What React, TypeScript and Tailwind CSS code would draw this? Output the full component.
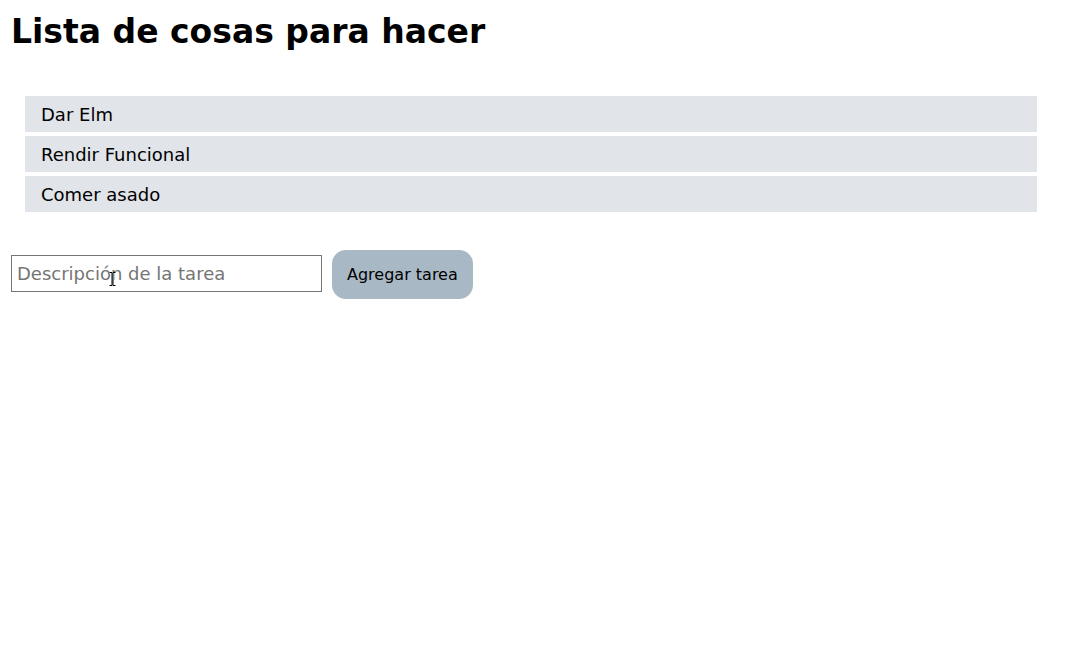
import React, { useState } from 'react';

export default function App() {
  const [tareas, setTareas] = useState<string[]>(['Dar Elm', 'Rendir Funcional', 'Comer asado']);
  const [texto, setTexto] = useState('');

  const agregar = () => {
    if (!texto.trim()) return;
    setTareas([...tareas, texto]);
    setTexto('');
  };

  return (
    <div className="min-h-screen bg-white px-[11px] pt-[8px] font-['DejaVu_Sans',sans-serif] text-black">
      <h1 className="text-[33px] leading-[48px] font-bold">Lista de cosas para hacer</h1>

      {/* Lista */}
      <ul className="mt-[40px] ml-[14px] mr-[37px] flex flex-col gap-[4px]">
        {tareas.map((t) => (
          <li key={t} className="flex h-[36px] items-center bg-[#e1e4e8] pl-[16px] text-[18px]">
            {t}
          </li>
        ))}
      </ul>

      {/* Formulario */}
      <div className="mt-[38px] flex items-start gap-[10px]">
        <div className="relative mt-[5px]">
          <input
            type="text"
            value={texto}
            onChange={(e) => setTexto(e.target.value)}
            placeholder="Descripción de la tarea"
            className="h-[37px] w-[311px] border border-[#767676] px-[5px] text-[18px] placeholder:text-[#757575] focus:outline-none"
          />
          <svg
            className="pointer-events-none absolute top-[17px] left-[98px]"
            width="7"
            height="14"
            viewBox="0 0 7 14"
          >
            <path d="M0.5 0.5h2.5v13h-2.5M6.5 0.5h-2.5v13h2.5" fill="none" stroke="#fff" strokeWidth="2" />
            <path d="M0.5 0.5h2.5v13h-2.5M6.5 0.5h-2.5v13h2.5" fill="none" stroke="#000" strokeWidth="1" />
          </svg>
        </div>
        <button
          type="button"
          onClick={agregar}
          className="h-[49px] rounded-[14px] bg-[#a8b9c5] px-[15px] text-[16px]"
        >
          Agregar tarea
        </button>
      </div>
    </div>
  );
}
